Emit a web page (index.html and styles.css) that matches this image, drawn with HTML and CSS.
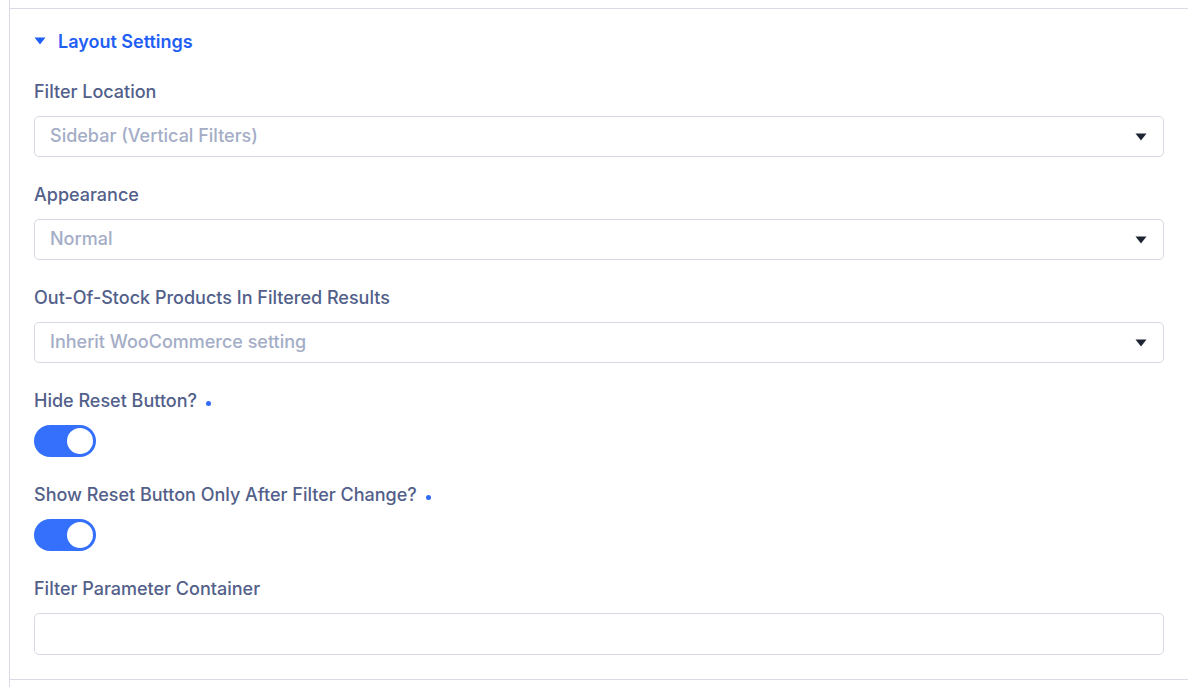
FILE: index.html
```html
<!DOCTYPE html>
<html>
<head>
<meta charset="utf-8">
<link rel="stylesheet" href="styles.css">
</head>
<body>
<div class="page">
  <section class="panel">
    <div class="panel-head">
      <svg class="caret" width="12" height="8" viewBox="0 0 12 8"><path d="M0.5 0.5 H11.5 L6 7.5 Z" fill="#1f5ff5"/></svg>
      <span class="panel-title">Layout Settings</span>
    </div>

    <div class="field">
      <div class="label">Filter Location</div>
      <div class="select"><span class="value">Sidebar (Vertical Filters)</span><svg class="arrow" width="12" height="8" viewBox="0 0 12 8"><path d="M0.5 0.5 H11.5 L6 7.5 Z" fill="#1e2532"/></svg></div>
    </div>

    <div class="field">
      <div class="label">Appearance</div>
      <div class="select"><span class="value">Normal</span><svg class="arrow" width="12" height="8" viewBox="0 0 12 8"><path d="M0.5 0.5 H11.5 L6 7.5 Z" fill="#1e2532"/></svg></div>
    </div>

    <div class="field">
      <div class="label">Out-Of-Stock Products In Filtered Results</div>
      <div class="select"><span class="value">Inherit WooCommerce setting</span><svg class="arrow" width="12" height="8" viewBox="0 0 12 8"><path d="M0.5 0.5 H11.5 L6 7.5 Z" fill="#1e2532"/></svg></div>
    </div>

    <div class="field">
      <div class="label">Hide Reset Button?<span class="dot"></span></div>
      <div class="toggle"><span class="knob"></span></div>
    </div>

    <div class="field">
      <div class="label">Show Reset Button Only After Filter Change?<span class="dot"></span></div>
      <div class="toggle"><span class="knob"></span></div>
    </div>

    <div class="field last">
      <div class="label">Filter Parameter Container</div>
      <div class="input"></div>
    </div>
  </section>
</div>
</body>
</html>
```
FILE: styles.css
```css
html, body {
  margin: 0;
  padding: 0;
  background: #ffffff;
}
body {
  font-family: Inter, "Noto Sans", sans-serif;
  -webkit-font-smoothing: antialiased;
}
.page {
  margin-left: 9px;
  border-left: 1px solid #d9dce6;
  min-height: 687px;
  padding-top: 8px;
  box-sizing: border-box;
}
.panel {
  border-top: 1px solid #d9dce6;
  border-bottom: 1px solid #d9dce6;
  padding: 21px 24px 24px 24px;
}
.panel-head {
  display: flex;
  align-items: center;
  height: 24px;
  margin-bottom: 25px;
}
.caret {
  display: block;
  margin-right: 12px;
  margin-top: -3px;
}
.panel-title {
  font-size: 18px;
  font-weight: 600;
  color: #1f5ff5;
  line-height: 24px;
}
.field {
  margin-bottom: 25px;
}
.field.last {
  margin-bottom: 0;
}
.label {
  font-size: 18px;
  font-weight: 500;
  color: #52608a;
  line-height: 24px;
  display: flex;
  align-items: center;
  padding-top: 1px;
  margin-bottom: 12px;
}
.dot {
  width: 5px;
  height: 5px;
  border-radius: 50%;
  background: #2f6bf6;
  margin-left: 9px;
  margin-top: 4px;
}
.select, .input {
  box-sizing: border-box;
  height: 41px;
  border: 1px solid #d6d9e4;
  border-radius: 5px;
  display: flex;
  align-items: center;
  justify-content: space-between;
  padding: 0 16px 0 15px;
}
.input {
  height: 42px;
}
.value {
  font-size: 18px;
  font-weight: 500;
  color: #a4adc6;
  line-height: 24px;
  margin-top: -2px;
}
.arrow {
  display: block;
}
.toggle {
  width: 62px;
  height: 32px;
  border-radius: 16px;
  background: #3470fb;
  display: flex;
  justify-content: flex-end;
  align-items: center;
}
.knob {
  width: 30px;
  height: 30px;
  box-sizing: border-box;
  border-radius: 50%;
  background: #ffffff;
  border: 2px solid #3470fb;
  margin-right: 1px;
}
```
